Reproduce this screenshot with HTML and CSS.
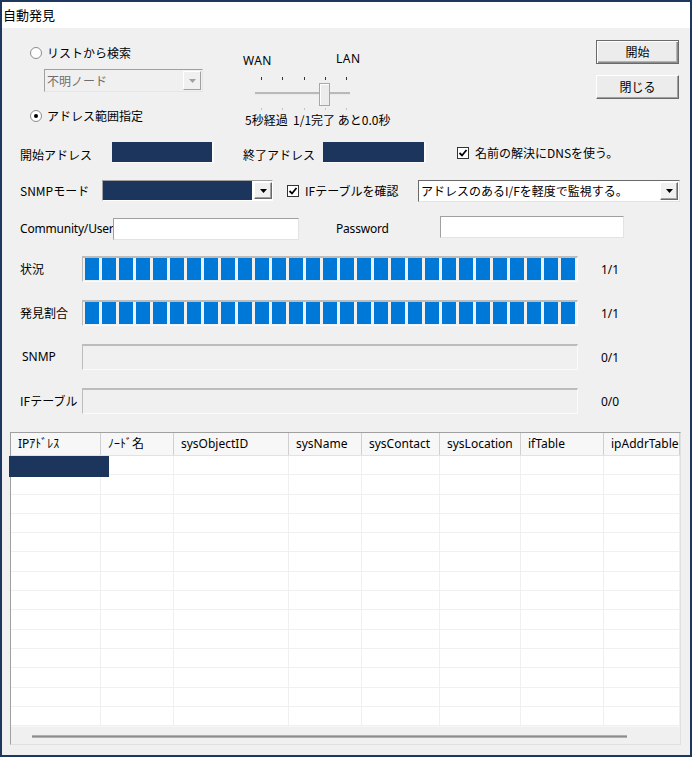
FILE: index.html
```html
<!DOCTYPE html>
<html lang="ja">
<head>
<meta charset="utf-8">
<title>自動発見</title>
<link rel="stylesheet" href="styles.css">
</head>
<body>
<div class="window">
  <div class="titlebar">自動発見</div>
  <div class="client">
    <div class="top">
      <div class="mode">
        <div class="radio-row"><span class="radio"></span><span>リストから検索</span></div>
        <div class="combo-disabled">
          <span class="cd-text">不明ノード</span>
          <span class="drop drop-disabled"><svg width="7" height="4" viewBox="0 0 7 4"><polygon points="0,0 7,0 3.5,4" fill="#a0a0a0"/></svg></span>
        </div>
        <div class="radio-row second"><span class="radio checked"></span><span>アドレス範囲指定</span></div>
      </div>
      <div class="slider-block">
        <div class="slider-labels"><span class="wan">WAN</span><span class="lan">LAN</span></div>
        <div class="slider">
          <div class="ticks"><i></i><i></i><i></i><i></i><i></i></div>
          <div class="track-wrap">
            <div class="track"></div>
            <div class="thumb"></div>
          </div>
          <div class="ticks faint"><i></i><i></i><i></i><i></i><i></i></div>
        </div>
        <div class="status">5秒経過&nbsp; 1/1完了 あと0.0秒</div>
      </div>
      <div class="buttons">
        <button class="btn default">開始</button>
        <button class="btn">閉じる</button>
      </div>
    </div>

    <div class="form">
      <div class="row row-addr">
        <span class="lbl w92">開始アドレス</span>
        <span class="navy-input w102"></span>
        <span class="lbl w80 ml29">終了アドレス</span>
        <span class="navy-input w103"></span>
        <span class="check-group ml31"><span class="checkbox"><svg width="10" height="10" viewBox="0 0 10 10"><polyline points="1.5,5 4,7.5 8.5,2" fill="none" stroke="#000" stroke-width="1.8"/></svg></span>名前の解決にDNSを使う。</span>
      </div>

      <div class="row row-snmp">
        <span class="lbl w82">SNMPモード</span>
        <span class="combo w171">
          <span class="combo-field navy"></span>
          <span class="drop"><svg width="7" height="4" viewBox="0 0 7 4"><polygon points="0,0 7,0 3.5,4" fill="#000"/></svg></span>
        </span>
        <span class="check-group ml14 w131"><span class="checkbox"><svg width="10" height="10" viewBox="0 0 10 10"><polyline points="1.5,5 4,7.5 8.5,2" fill="none" stroke="#000" stroke-width="1.8"/></svg></span>IFテーブルを確認</span>
        <span class="combo combo-dark w262">
          <span class="combo-field text">アドレスのあるI/Fを軽度で監視する。</span>
          <span class="drop"><svg width="7" height="4" viewBox="0 0 7 4"><polygon points="0,0 7,0 3.5,4" fill="#000"/></svg></span>
        </span>
      </div>

      <div class="row row-comm">
        <span class="lbl w93 latin">Community/User</span>
        <span class="textbox w186"></span>
        <span class="lbl w104 ml37 latin">Password</span>
        <span class="textbox w184 up2"></span>
      </div>

      <div class="row prow first">
        <span class="lbl w62">状況</span>
        <div class="bar"><div class="blocks full"></div></div>
        <span class="count">1/1</span>
      </div>
      <div class="row prow">
        <span class="lbl w62">発見割合</span>
        <div class="bar"><div class="blocks full"></div></div>
        <span class="count">1/1</span>
      </div>
      <div class="row prow">
        <span class="lbl w62 snmp">SNMP</span>
        <div class="bar"></div>
        <span class="count">0/1</span>
      </div>
      <div class="row prow">
        <span class="lbl w62">IFテーブル</span>
        <div class="bar"></div>
        <span class="count">0/0</span>
      </div>
    </div>

    <div class="list">
      <div class="list-head">
        <span class="c1">IPｱﾄﾞﾚｽ</span>
        <span class="c2">ﾉｰﾄﾞ名</span>
        <span class="c3">sysObjectID</span>
        <span class="c4">sysName</span>
        <span class="c5">sysContact</span>
        <span class="c6">sysLocation</span>
        <span class="c7">ifTable</span>
        <span class="c8">ipAddrTable</span>
      </div>
      <div class="list-body">
        <div class="lrow"><span class="c1"><span class="sel"></span></span><span class="c2"></span><span class="c3"></span><span class="c4"></span><span class="c5"></span><span class="c6"></span><span class="c7"></span><span class="c8"></span></div>
        <div class="lrow"><span class="c1"></span><span class="c2"></span><span class="c3"></span><span class="c4"></span><span class="c5"></span><span class="c6"></span><span class="c7"></span><span class="c8"></span></div>
        <div class="lrow"><span class="c1"></span><span class="c2"></span><span class="c3"></span><span class="c4"></span><span class="c5"></span><span class="c6"></span><span class="c7"></span><span class="c8"></span></div>
        <div class="lrow"><span class="c1"></span><span class="c2"></span><span class="c3"></span><span class="c4"></span><span class="c5"></span><span class="c6"></span><span class="c7"></span><span class="c8"></span></div>
        <div class="lrow"><span class="c1"></span><span class="c2"></span><span class="c3"></span><span class="c4"></span><span class="c5"></span><span class="c6"></span><span class="c7"></span><span class="c8"></span></div>
        <div class="lrow"><span class="c1"></span><span class="c2"></span><span class="c3"></span><span class="c4"></span><span class="c5"></span><span class="c6"></span><span class="c7"></span><span class="c8"></span></div>
        <div class="lrow"><span class="c1"></span><span class="c2"></span><span class="c3"></span><span class="c4"></span><span class="c5"></span><span class="c6"></span><span class="c7"></span><span class="c8"></span></div>
        <div class="lrow"><span class="c1"></span><span class="c2"></span><span class="c3"></span><span class="c4"></span><span class="c5"></span><span class="c6"></span><span class="c7"></span><span class="c8"></span></div>
        <div class="lrow"><span class="c1"></span><span class="c2"></span><span class="c3"></span><span class="c4"></span><span class="c5"></span><span class="c6"></span><span class="c7"></span><span class="c8"></span></div>
        <div class="lrow"><span class="c1"></span><span class="c2"></span><span class="c3"></span><span class="c4"></span><span class="c5"></span><span class="c6"></span><span class="c7"></span><span class="c8"></span></div>
        <div class="lrow"><span class="c1"></span><span class="c2"></span><span class="c3"></span><span class="c4"></span><span class="c5"></span><span class="c6"></span><span class="c7"></span><span class="c8"></span></div>
        <div class="lrow"><span class="c1"></span><span class="c2"></span><span class="c3"></span><span class="c4"></span><span class="c5"></span><span class="c6"></span><span class="c7"></span><span class="c8"></span></div>
        <div class="lrow"><span class="c1"></span><span class="c2"></span><span class="c3"></span><span class="c4"></span><span class="c5"></span><span class="c6"></span><span class="c7"></span><span class="c8"></span></div>
        <div class="lrow"><span class="c1"></span><span class="c2"></span><span class="c3"></span><span class="c4"></span><span class="c5"></span><span class="c6"></span><span class="c7"></span><span class="c8"></span></div>
      </div>
      <div class="hscroll"><div class="hthumb"></div></div>
    </div>
  </div>
</div>
</body>
</html>
```

FILE: styles.css
```css
* { box-sizing: border-box; }
html, body { margin: 0; padding: 0; }
body {
  width: 692px;
  height: 757px;
  font-family: "Noto Sans", "Noto Sans CJK JP", sans-serif;
  font-size: 12px;
  color: #000;
  background: #fff;
  overflow: hidden;
}
.window {
  width: 692px;
  height: 757px;
  border: 2px solid #1d375e;
  display: flex;
  flex-direction: column;
  background: #f0f0f0;
}
.titlebar {
  height: 26px;
  flex: none;
  background: #fff;
  font-family: "Noto Sans CJK JP", sans-serif;
  font-size: 13px;
  line-height: 26px;
  padding-left: 1px;
}
.client {
  flex: 1;
  display: flex;
  flex-direction: column;
  background: #f0f0f0;
}

/* ---------- top section ---------- */
.top {
  display: flex;
  height: 107px;
  flex: none;
}
.mode {
  width: 203px;
  flex: none;
  padding-left: 28px;
  padding-top: 17px;
  font-family: "Noto Sans CJK JP", sans-serif;
}
.radio-row {
  display: flex;
  align-items: center;
  height: 16px;
  gap: 5px;
  line-height: 16px;
}
.radio-row.second { margin-top: 16px; }
.radio {
  width: 12px;
  height: 12px;
  border-radius: 50%;
  border: 1px solid #8c8c8c;
  background: #fff;
  display: flex;
  align-items: center;
  justify-content: center;
  flex: none;
}
.radio.checked::after {
  content: "";
  width: 4px;
  height: 4px;
  border-radius: 50%;
  background: #000;
}
.combo-disabled {
  margin-top: 8px;
  margin-left: 14px;
  width: 159px;
  height: 23px;
  display: flex;
  align-items: stretch;
  border: 1px solid;
  border-color: #a0a0a0 #e6e6e6 #e6e6e6 #a0a0a0;
  background: #f0f0f0;
  padding: 1px;
}
.cd-text {
  flex: 1;
  color: #6d6d6d;
  line-height: 19px;
  padding-left: 1px;
}
.drop {
  width: 18px;
  flex: none;
  display: flex;
  align-items: center;
  justify-content: center;
  background: #f0f0f0;
  border: 1px solid;
  border-color: #fff #696969 #696969 #fff;
  box-shadow: inset -1px -1px 0 #a0a0a0;
}
.drop-disabled { border-color: #fff #a0a0a0 #a0a0a0 #fff; box-shadow: none; }

.slider-block {
  margin-left: 38px;
  width: 170px;
  flex: none;
  padding-top: 23px;
}
.slider-labels {
  display: flex;
  height: 16px;
  align-items: flex-start;
  line-height: 16px;
  font-size: 12px;
  letter-spacing: 0.5px;
}
.wan { width: 93px; padding-top: 2px; }
.lan { margin-top: 0; }
.slider { height: 45px; display: flow-root; }
.ticks {
  margin-left: 18px;
  width: 86px;
  display: flex;
  justify-content: space-between;
  margin-top: 10px;
  height: 3px;
}
.ticks i {
  width: 1px;
  height: 3px;
  background: #333;
}
.ticks.faint { margin-top: 2px; height: 2px; }
.ticks.faint i { height: 2px; background: #c4c4c4; }
.track-wrap {
  position: relative;
  margin-left: 12px;
  width: 95px;
  height: 23px;
  margin-top: 3px;
  padding-top: 9px;
}
.track {
  height: 3px;
  background: #b9b9b9;
  border-bottom: 1px solid #e9e9e9;
}
.thumb {
  position: absolute;
  left: 64px;
  top: 0;
  width: 11px;
  height: 23px;
  background: #ececec;
  border: 1px solid #a7a7a7;
  box-shadow: inset 1px 1px 0 #fff;
}
.status {
  margin-top: 1px;
  margin-left: 2px;
  height: 14px;
  line-height: 14px;
  white-space: nowrap;
  font-family: "Noto Sans CJK JP", sans-serif;
  font-size: 12px;
}

.buttons {
  margin-left: auto;
  padding-right: 11px;
  padding-top: 12px;
  display: flex;
  flex-direction: column;
  gap: 11px;
}
.btn {
  width: 83px;
  height: 24px;
  font-family: "Noto Sans CJK JP", sans-serif;
  font-size: 12px;
  line-height: 20px;
  padding: 0;
  background: #ececec;
  border: 1px solid;
  border-color: #fff #696969 #696969 #fff;
  box-shadow: inset -1px -1px 0 #a0a0a0;
  color: #000;
}
.btn.default {
  border: 1px solid #6a6a6a;
  box-shadow: inset 1px 1px 0 #fff, inset -1px -1px 0 #8a8a8a, inset -2px -2px 0 #b4b4b4;
}

/* ---------- form rows ---------- */
.form {
  padding-left: 18px;
  font-family: "Noto Sans CJK JP", sans-serif;
}
.row {
  display: flex;
  align-items: center;
  white-space: nowrap;
}
.lbl { flex: none; line-height: 16px; }
.latin { font-family: "Noto Sans", sans-serif; font-size: 12px; letter-spacing: -0.2px; }
.w62 { width: 62px; }
.w80 { width: 80px; }
.w82 { width: 82px; }
.w92 { width: 92px; }
.w93 { width: 93px; }
.w104 { width: 104px; }
.w102 { width: 102px; }
.w103 { width: 103px; }
.w131 { width: 131px; }
.w171 { width: 171px; }
.w184 { width: 184px; }
.w186 { width: 186px; }
.w262 { width: 262px; }
.ml14 { margin-left: 14px; }
.ml29 { margin-left: 29px; }
.ml31 { margin-left: 31px; }
.ml37 { margin-left: 37px; }

.row-addr { margin-top: 7px; height: 21px; }
.row-addr .lbl { padding-top: 4px; }
.navy-input {
  height: 21px;
  flex: none;
  background: #1c355d;
  border-right: 2px solid #fafafa;
  border-bottom: 1px solid #fafafa;
}
.check-group {
  display: flex;
  align-items: center;
  gap: 6px;
  flex: none;
  line-height: 16px;
}
.checkbox {
  width: 12px;
  height: 12px;
  border: 1px solid #333;
  background: #fff;
  display: flex;
  align-items: center;
  justify-content: center;
  flex: none;
}

.row-snmp { margin-top: 17px; height: 21px; }
.combo {
  height: 21px;
  flex: none;
  display: flex;
  background: #fff;
  border: 1px solid;
  border-color: #a0a0a0 #fff #fff #a0a0a0;
  padding: 1px 0 1px 0;
  gap: 2px;
}
.combo-field { flex: 1; }
.combo-field.navy { background: #1c355d; margin-top: -1px; margin-bottom: -1px; }
.combo-field.text { line-height: 18px; padding-left: 2px; font-size: 12px; }
.combo-dark {
  height: 22px;
  border-color: #6a6a6a #e3e3e3 #e3e3e3 #6a6a6a;
  padding: 1px 1px 1px 0;
}

.row-comm { margin-top: 17px; height: 22px; }
.textbox {
  height: 22px;
  flex: none;
  background: #fff;
  border: 1px solid;
  border-color: #a0a0a0 #e3e3e3 #e3e3e3 #a0a0a0;
}
.up2 { align-self: flex-start; margin-top: -2px; }

.prow { margin-top: 18px; height: 26px; }
.prow.first { margin-top: 16px; }
.snmp { font-family: "Noto Sans", sans-serif; padding-left: 2px; }
.bar {
  width: 496px;
  height: 26px;
  flex: none;
  border: 1px solid;
  border-color: #bcbcbc #fbfbfb #fbfbfb #bcbcbc;
  border-top-width: 2px;
  background: #f0f0f0;
  padding: 0 2px 1px 2px;
}
.blocks.full {
  height: 22px;
  width: 490px;
  background: repeating-linear-gradient(90deg, #0078d7 0, #0078d7 14px, #f0f0f0 14px, #f0f0f0 17px);
}
.count {
  margin-left: 23px;
  font-family: "Noto Sans", sans-serif;
  font-size: 12px;
}

/* ---------- list view ---------- */
.list {
  margin: 18px 0 0 8px;
  width: 671px;
  height: 313px;
  border: 1px solid #a0a0a0;
  border-right-color: #e0e0e0;
  border-bottom-color: #e0e0e0;
  background: #fff;
  display: flex;
  flex-direction: column;
  font-family: "Noto Sans", "Noto Sans CJK JP", sans-serif;
}
.list-head, .lrow { display: flex; flex: none; }
.list-head {
  height: 23px;
  background: #f7f7f7;
  border-bottom: 1px solid #e2e2e2;
  line-height: 22px;
}
.list-head span {
  padding-left: 7px;
  border-right: 1px solid #d0d0d0;
  white-space: nowrap;
  overflow: hidden;
}
.c1 { width: 90px; }
.c2 { width: 73px; }
.c3 { width: 115px; }
.c4 { width: 73px; }
.c5 { width: 78px; }
.c6 { width: 81px; }
.c7 { width: 83px; }
.c8 { width: 76px; }
.list-body { flex: none; }
.lrow { height: 19.3px; }
.lrow span {
  border-right: 1px solid #f0f0f0;
  border-bottom: 1px solid #f0f0f0;
  flex: none;
}
.sel {
  display: block;
  position: relative;
  z-index: 1;
  width: 100px;
  height: 21px;
  margin-left: -2px;
  background: #1c355d;
  border: 0 !important;
}
.hscroll {
  flex: 1;
  background: #f0f0f0;
  border-top: 1px solid #f7f7f7;
  padding-top: 8px;
  padding-left: 21px;
}
.hthumb {
  width: 595px;
  height: 3px;
  background: #8c8c8c;
  border-top: 1px solid #b0b0b0;
  border-bottom: 1px solid #b0b0b0;
}
```
